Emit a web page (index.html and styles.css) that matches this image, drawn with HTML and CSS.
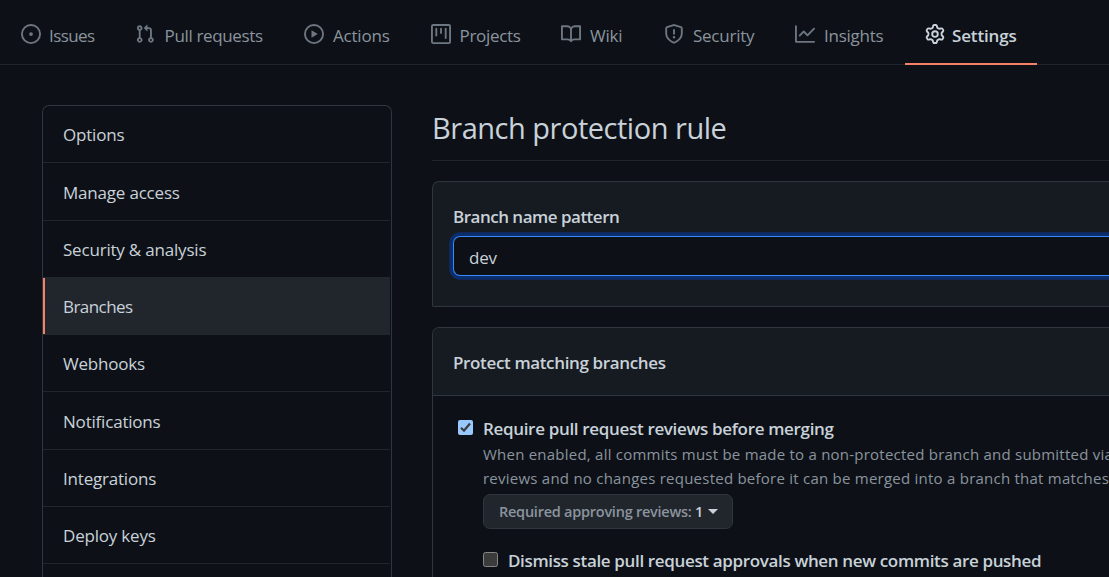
FILE: index.html
```
<!DOCTYPE html>
<html lang="en">
<head>
<meta charset="utf-8">
<title>Branch protection rule</title>
<link rel="stylesheet" href="styles.css">
</head>
<body>
<nav class="tabs">
  <a class="tab"><svg class="icon" viewBox="0 0 16 16"><path d="M8 9.5a1.5 1.5 0 100-3 1.5 1.5 0 000 3z"/><path fill-rule="evenodd" d="M8 0a8 8 0 100 16A8 8 0 008 0zM1.5 8a6.5 6.5 0 1113 0 6.5 6.5 0 01-13 0z"/></svg><span class="t-issues">Issues</span></a>
  <a class="tab"><svg class="icon" viewBox="0 0 16 16"><path fill-rule="evenodd" d="M7.177 3.073L9.573.677A.25.25 0 0110 .854v4.792a.25.25 0 01-.427.177L7.177 3.427a.25.25 0 010-.354zM3.75 2.5a.75.75 0 100 1.5.75.75 0 000-1.5zm-2.25.75a2.25 2.25 0 113 2.122v5.256a2.251 2.251 0 11-1.5 0V5.372A2.25 2.25 0 011.5 3.25zM11 2.5h-1V4h1a1 1 0 011 1v5.628a2.251 2.251 0 101.5 0V5A2.5 2.5 0 0011 2.500zm1 10.250a.75.75 0 111.5 0 .75.75 0 01-1.500 0zM3.750 12a.75.75 0 100 1.500.75.75 0 000-1.500z"/></svg><span class="t-pulls">Pull requests</span></a>
  <a class="tab"><svg class="icon" viewBox="0 0 16 16"><path fill-rule="evenodd" d="M1.500 8a6.500 6.500 0 1113 0 6.500 6.500 0 01-13 0zM8 0a8 8 0 100 16A8 8 0 008 0zM6.379 5.227A.25.25 0 006 5.442v5.117a.25.25 0 00.379.214l4.264-2.559a.25.25 0 000-.428L6.379 5.227z"/></svg><span class="t-actions">Actions</span></a>
  <a class="tab"><svg class="icon" viewBox="0 0 16 16"><path fill-rule="evenodd" d="M1.750 0A1.750 1.750 0 000 1.750v12.500C0 15.216.784 16 1.750 16h12.500A1.750 1.750 0 0016 14.250V1.750A1.750 1.750 0 0014.250 0H1.750zM1.500 1.750a.25.25 0 01.25-.25h12.500a.25.25 0 01.25.25v12.500a.25.25 0 01-.25.25H1.750a.25.25 0 01-.25-.25V1.750zM11.750 3a.75.75 0 00-.75.75v7.500a.75.75 0 001.500 0v-7.500a.75.75 0 00-.75-.75zm-8.250.75a.75.75 0 011.500 0v5.500a.75.75 0 01-1.500 0v-5.500zM8 3a.75.75 0 00-.75.75v3.500a.75.75 0 001.500 0v-3.500A.75.75 0 008 3z"/></svg><span class="t-projects">Projects</span></a>
  <a class="tab"><svg class="icon" viewBox="0 0 16 16"><path fill-rule="evenodd" d="M0 1.750A.75.75 0 01.75 1h4.253c1.227 0 2.317.59 3 1.501A3.744 3.744 0 0111.006 1h4.245a.75.75 0 01.75.75v10.500a.75.75 0 01-.75.75h-4.507a2.250 2.250 0 00-1.591.659l-.622.621a.75.75 0 01-1.060 0l-.622-.621A2.250 2.250 0 005.258 13H.75a.75.75 0 01-.75-.75V1.750zm8.755 3a2.250 2.250 0 012.250-2.250H14.500v9h-3.757c-.71 0-1.400.201-1.992.572l.004-7.322zm-1.504 7.324l.004-5.073-.002-2.253A2.250 2.250 0 005.003 2.500H1.500v9h3.757a3.750 3.750 0 011.994.574z"/></svg><span class="t-wiki">Wiki</span></a>
  <a class="tab"><svg class="icon" viewBox="0 0 16 16"><path fill-rule="evenodd" d="M7.467.133a1.750 1.750 0 011.066 0l5.250 1.680A1.750 1.750 0 0115 3.480V7c0 1.566-.32 3.182-1.303 4.682-.983 1.498-2.585 2.813-5.032 3.855a1.700 1.700 0 01-1.330 0c-2.447-1.042-4.049-2.357-5.032-3.855C1.320 10.182 1 8.566 1 7V3.480a1.750 1.750 0 011.217-1.667l5.250-1.680zm.61 1.429a.25.25 0 00-.153 0l-5.250 1.680a.25.25 0 00-.174.238V7c0 1.358.275 2.666 1.057 3.860.784 1.194 2.121 2.340 4.366 3.297a.2.2 0 00.154 0c2.245-.956 3.582-2.104 4.366-3.298C13.225 9.666 13.500 8.360 13.500 7V3.480a.25.25 0 00-.174-.237l-5.250-1.680zM8.750 4.750a.75.75 0 00-1.500 0v3a.75.75 0 001.500 0v-3zM9 10.500a1 1 0 11-2 0 1 1 0 012 0z"/></svg><span class="t-security">Security</span></a>
  <a class="tab"><svg class="icon" viewBox="0 0 16 16"><path fill-rule="evenodd" d="M1.500 1.750a.75.75 0 00-1.500 0v12.500c0 .414.336.75.75.75h14.500a.75.75 0 000-1.500H1.500V1.750zm14.280 2.530a.75.75 0 00-1.060-1.060L10 7.940 7.530 5.470a.75.75 0 00-1.060 0L3.220 8.720a.75.75 0 001.060 1.060L7 7.060l2.470 2.470a.75.75 0 001.060 0l5.250-5.250z"/></svg><span class="t-insights">Insights</span></a>
  <a class="tab tab-active"><svg class="icon" viewBox="0 0 16 16"><path fill-rule="evenodd" d="M7.429 1.525a6.593 6.593 0 011.142 0c.036.003.108.036.137.146l.289 1.105c.147.56.55.967.997 1.189.174.086.341.183.501.290.417.278.97.423 1.530.270l1.102-.303c.11-.03.175.016.195.046.219.310.410.641.573.989.014.031.022.11-.059.190l-.815.806c-.411.406-.562.957-.53 1.456a4.588 4.588 0 010 .582c-.032.499.119 1.050.53 1.456l.815.806c.08.080.073.159.059.190a6.494 6.494 0 01-.573.990c-.02.029-.086.074-.195.045l-1.103-.303c-.559-.153-1.112-.008-1.529.270-.16.107-.327.204-.5.290-.449.222-.851.628-.998 1.189l-.289 1.105c-.029.11-.101.143-.137.146a6.613 6.613 0 01-1.142 0c-.036-.003-.108-.037-.137-.146l-.289-1.105c-.147-.56-.55-.967-.997-1.189a4.502 4.502 0 01-.501-.290c-.417-.278-.97-.423-1.530-.270l-1.102.303c-.11.030-.175-.016-.195-.046a6.492 6.492 0 01-.573-.989c-.014-.031-.022-.11.059-.190l.815-.806c.411-.406.562-.957.53-1.456a4.587 4.587 0 010-.582c.032-.499-.119-1.050-.53-1.456l-.815-.806c-.08-.08-.073-.159-.059-.190a6.440 6.440 0 01.573-.990c.02-.029.086-.075.195-.045l1.103.303c.559.153 1.112.008 1.529-.270.16-.107.327-.204.5-.290.449-.222.851-.628.998-1.189l.289-1.105c.029-.11.101-.143.137-.146zM8 0c-.236 0-.47.010-.701.030-.743.065-1.290.615-1.458 1.261l-.290 1.106c-.017.066-.078.158-.211.224a5.994 5.994 0 00-.668.386c-.123.082-.233.090-.3.071L3.270 2.776c-.644-.177-1.392.020-1.820.630a7.977 7.977 0 00-.704 1.217c-.315.675-.111 1.422.363 1.891l.815.806c.050.048.098.147.088.294a6.084 6.084 0 000 .772c.010.147-.038.246-.088.294l-.815.806c-.474.469-.678 1.216-.363 1.891.200.428.436.835.704 1.218.428.609 1.176.806 1.820.630l1.103-.303c.066-.019.176-.011.299.071.213.143.436.272.668.386.133.066.194.158.212.224l.289 1.106c.169.646.715 1.196 1.458 1.260a8.094 8.094 0 001.402 0c.743-.064 1.290-.614 1.458-1.260l.290-1.106c.017-.066.078-.158.211-.224a5.980 5.980 0 00.668-.386c.123-.082.233-.090.3-.071l1.102.302c.644.177 1.392-.020 1.820-.630.268-.382.505-.789.704-1.217.315-.675.111-1.422-.364-1.891l-.814-.806c-.050-.048-.098-.147-.088-.294a6.100 6.100 0 000-.772c-.010-.147.039-.246.088-.294l.814-.806c.475-.469.679-1.216.364-1.891a7.992 7.992 0 00-.704-1.218c-.428-.609-1.176-.806-1.820-.630l-1.103.303c-.066.019-.176.011-.299-.071a5.991 5.991 0 00-.668-.386c-.133-.066-.194-.158-.212-.224L10.160 1.290C9.990.645 9.444.095 8.701.031A8.094 8.094 0 008 0zm1.500 8a1.500 1.500 0 11-3 0 1.500 1.500 0 013 0zM11 8a3 3 0 11-6 0 3 3 0 016 0z"/></svg><span class="t-settings">Settings</span></a>
</nav>
<div class="layout">
  <aside class="menu">
    <a class="menu-item">Options</a>
    <a class="menu-item">Manage access</a>
    <a class="menu-item">Security &amp; analysis</a>
    <a class="menu-item menu-active">Branches</a>
    <a class="menu-item">Webhooks</a>
    <a class="menu-item">Notifications</a>
    <a class="menu-item">Integrations</a>
    <a class="menu-item">Deploy keys</a>
  </aside>
  <main class="content">
    <h1 class="title">Branch protection rule</h1>
    <section class="box pattern">
      <label class="label" for="pattern">Branch name pattern</label>
      <input class="input" id="pattern" type="text" value="dev">
    </section>
    <section class="box rules">
      <h2 class="rules-head">Protect matching branches</h2>
      <div class="rule">
        <svg class="check" viewBox="0 0 15 15"><rect width="15" height="15" rx="2" fill="#99c8ff"/><path d="M3 7.700l3 3 6-7.200" fill="none" stroke="#3b3b3b" stroke-width="2.200"/></svg>
        <div class="rule-body">
          <span class="rule-title">Require pull request reviews before merging</span>
          <p class="desc"><span class="line-a">When enabled, all commits must be made to a non-protected branch and submitted via</span><br><span class="line-b">reviews and no changes requested before it can be merged into a branch that matches the</span></p>
          <button class="button"><span>Required approving reviews: <b>1</b></span><i class="caret"></i></button>
          <div class="sub-rule">
            <svg class="check" viewBox="0 0 15 15"><rect x=".5" y=".5" width="14" height="14" rx="2" fill="#3b3b3b" stroke="#858585"/></svg>
            <span class="rule-title">Dismiss stale pull request approvals when new commits are pushed</span>
          </div>
        </div>
      </div>
    </section>
  </main>
</div>
</body>
</html>
```
FILE: styles.css
```
* { box-sizing: border-box; }
body {
  display: flex;
  flex-direction: column;
  margin: 0;
  height: 577px;
  overflow: hidden;
  background: #0d1117;
  color: #c9d1d9;
  font: 17px/26px "Open Sans", "Noto Sans", sans-serif;
  white-space: nowrap;
}
.tabs {
  display: grid;
  flex: none;
  grid-template-columns: 114px 169px 127px 130px 103px 131px 130px 132px;
  height: 65px;
  padding-left: 1px;
  border-bottom: 1px solid #21262d;
  color: #8b949e;
}
.tab {
  display: flex;
  align-items: flex-start;
  gap: 8px;
  height: 65px;
  padding: 23px 0 0 20px;
  letter-spacing: -0.2px;
}
.icon { width: 20px; height: 20px; margin-top: 1px; flex: none; fill: #6e7681; }
.t-issues { letter-spacing: -0.6px; }
.t-pulls { margin-left: 1.5px; letter-spacing: -0.35px; }
.t-actions, .t-wiki, .t-security, .t-insights { margin-left: 1px; }
.t-projects { margin-left: 0.5px; letter-spacing: -0.3px; }
.t-security, .t-insights { letter-spacing: -0.25px; }
.tab-active { color: #c9d1d9; font-weight: 600; border-bottom: 2px solid #f78166; }
.tab-active .icon { fill: #c9d1d9; }
.t-settings { margin-left: -1px; letter-spacing: -0.15px; }
.layout { display: flex; flex: 1; min-height: 0; gap: 40px; padding: 40px 0 0 42px; }
.menu {
  flex: none;
  width: 350px;
  padding-right: 1px;
  border: 1px solid #30363d;
  border-bottom: 0;
  border-radius: 7px 7px 0 0;
}
.menu-item {
  display: block;
  height: 57.25px;
  padding: 16.3px 0 0 20px;
  border-bottom: 1px solid #21262d;
  letter-spacing: -0.2px;
}
.menu-active { background: #21262d; box-shadow: inset 2px 0 #f78166; letter-spacing: -0.55px; }
.content { flex: 1; min-width: 0; overflow: hidden; }
.title {
  height: 56px;
  margin: 0 0 20px;
  padding-top: 3px;
  border-bottom: 1px solid #21262d;
  font-size: 29px;
  font-weight: 400;
  line-height: 40px;
  letter-spacing: -0.48px;
}
.box {
  border: 1px solid #30363d;
  border-right: 0;
  border-radius: 7px 0 0 7px;
}
.pattern { height: 126px; padding: 22px 0 0 20px; border-bottom-left-radius: 2px; background: #161b22; }
.label { display: block; height: 32px; font-weight: 600; letter-spacing: -0.5px; }
.input {
  display: block;
  width: 100%;
  height: 40px;
  padding: 2px 15px 0;
  border: 1px solid #388bfd;
  border-right: 0;
  border-radius: 7px 0 0 7px;
  outline: none;
  box-shadow: 0 0 0 3.75px #0c2d6b;
  background: #0d1117;
  color: #c9d1d9;
  font: inherit;
  letter-spacing: -0.2px;
}
.rules { height: 300px; margin-top: 20px; }
.rules-head {
  height: 68px;
  margin: 0;
  padding: 22px 0 0 20px;
  border-bottom: 1px solid #30363d;
  border-radius: 6px 0 0 0;
  background: #161b22;
  font-size: 17px;
  font-weight: 600;
  letter-spacing: -0.36px;
}
.rule { display: flex; gap: 10px; padding: 20px 0 0 25px; }
.check { flex: none; width: 15px; height: 15px; margin-top: 4px; }
.rule-title { display: block; font-weight: 600; letter-spacing: -0.33px; }
.sub-rule .rule-title { letter-spacing: -0.35px; }
.desc { margin: 0 0 4px; color: #8b949e; font-size: 15px; line-height: 24px; }
.line-a { letter-spacing: 0.23px; }
.line-b { letter-spacing: 0.24px; }
.button {
  display: flex;
  align-items: center;
  gap: 5px;
  width: 250px;
  height: 35px;
  padding: 0 15px;
  border: 1px solid #30363d;
  border-radius: 7px;
  background: #21262d;
  color: #8b949e;
  font: 600 14.5px/24px "Open Sans", "Noto Sans", sans-serif;
  letter-spacing: -0.25px;
}
.button b { color: #c9d1d9; font-weight: 600; }
.caret { border: 5px solid transparent; border-top-color: #c9d1d9; border-bottom: 0; }
.sub-rule { display: flex; gap: 10px; padding-top: 19px; }
```
